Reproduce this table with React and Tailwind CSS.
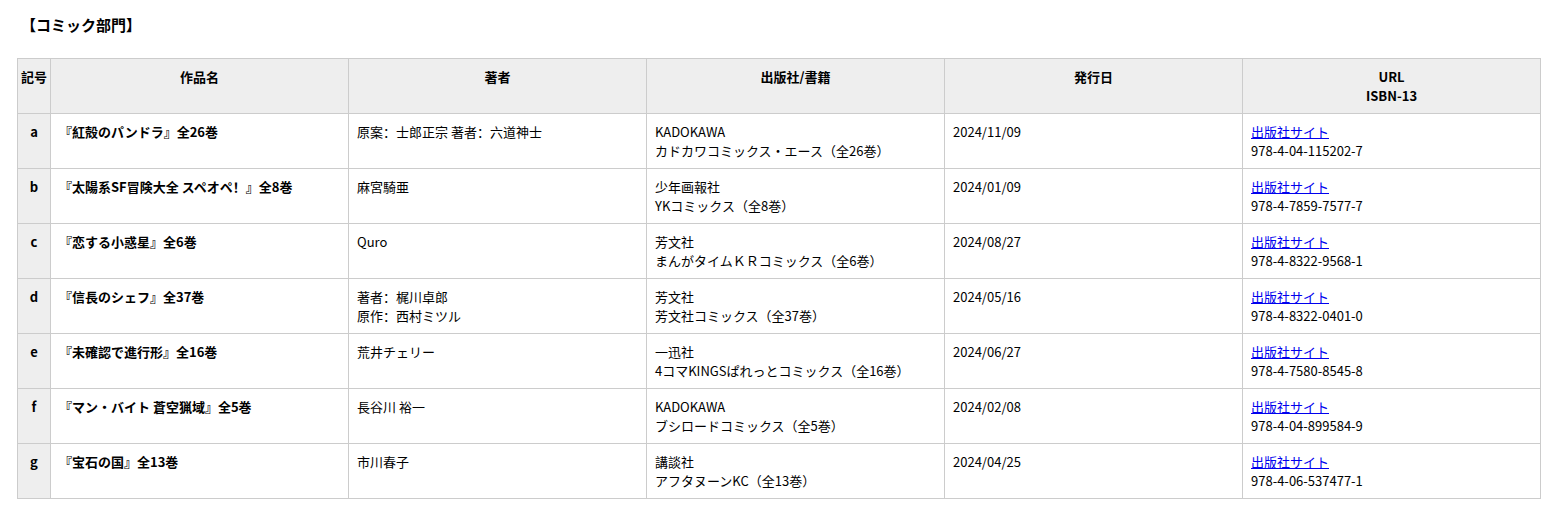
import React from 'react';

const comics = [
  { id: 'a', title: '『紅殻のパンドラ』全26巻', author: ['原案：士郎正宗 著者：六道神士'], publisher: ['KADOKAWA', 'カドカワコミックス・エース（全26巻）'], date: '2024/11/09', isbn: '978-4-04-115202-7' },
  { id: 'b', title: '『太陽系SF冒険大全 スペオペ！』全8巻', author: ['麻宮騎亜'], publisher: ['少年画報社', 'YKコミックス（全8巻）'], date: '2024/01/09', isbn: '978-4-7859-7577-7' },
  { id: 'c', title: '『恋する小惑星』全6巻', author: ['Quro'], publisher: ['芳文社', 'まんがタイムＫＲコミックス（全6巻）'], date: '2024/08/27', isbn: '978-4-8322-9568-1' },
  { id: 'd', title: '『信長のシェフ』全37巻', author: ['著者：梶川卓郎', '原作：西村ミツル'], publisher: ['芳文社', '芳文社コミックス（全37巻）'], date: '2024/05/16', isbn: '978-4-8322-0401-0' },
  { id: 'e', title: '『未確認で進行形』全16巻', author: ['荒井チェリー'], publisher: ['一迅社', '4コマKINGSぱれっとコミックス（全16巻）'], date: '2024/06/27', isbn: '978-4-7580-8545-8' },
  { id: 'f', title: '『マン・バイト 蒼空猟域』全5巻', author: ['長谷川 裕一'], publisher: ['KADOKAWA', 'ブシロードコミックス（全5巻）'], date: '2024/02/08', isbn: '978-4-04-899584-9' },
  { id: 'g', title: '『宝石の国』全13巻', author: ['市川春子'], publisher: ['講談社', 'アフタヌーンKC（全13巻）'], date: '2024/04/25', isbn: '978-4-06-537477-1' },
];

export default function App() {
  return (
    <div className="bg-white text-black px-[17px] pt-[14px] pb-[14px] font-['Noto_Sans_CJK_SC','Noto_Sans_CJK_JP',sans-serif]">
      <h2 className="text-[15px] font-bold leading-[22px] pl-[4px] mb-[22px]">【コミック部門】</h2>

      <table className="w-[1524px] border-collapse text-[13px] leading-[19px] table-fixed">
        <colgroup>
          <col className="w-[33px]" />
          <col />
          <col />
          <col />
          <col />
          <col />
        </colgroup>
        <thead>
          <tr className="h-[55px] bg-[#eeeeee]">
            <th className="border border-[#cccccc] align-top pt-[8px] font-bold">記号</th>
            <th className="border border-[#cccccc] align-top pt-[8px] font-bold">作品名</th>
            <th className="border border-[#cccccc] align-top pt-[8px] font-bold">著者</th>
            <th className="border border-[#cccccc] align-top pt-[8px] font-bold">出版社/書籍</th>
            <th className="border border-[#cccccc] align-top pt-[8px] font-bold">発行日</th>
            <th className="border border-[#cccccc] align-top pt-[8px] font-bold">URL<br />ISBN-13</th>
          </tr>
        </thead>
        <tbody>
          {comics.map((c) => (
            <tr key={c.id} className="h-[55px]">
              <td className="border border-[#cccccc] bg-[#eeeeee] align-top text-center font-bold pt-[8px]">{c.id}</td>
              <td className="border border-[#cccccc] align-top font-bold px-[8px] pt-[8px]">{c.title}</td>
              <td className="border border-[#cccccc] align-top px-[8px] pt-[8px]">
                {c.author.map((a) => <div key={a}>{a}</div>)}
              </td>
              <td className="border border-[#cccccc] align-top px-[8px] pt-[8px]">
                {c.publisher.map((p) => <div key={p}>{p}</div>)}
              </td>
              <td className="border border-[#cccccc] align-top px-[8px] pt-[8px]">{c.date}</td>
              <td className="border border-[#cccccc] align-top px-[8px] pt-[8px]">
                <a href="#" className="text-[#0000ee] underline">出版社サイト</a>
                <div>{c.isbn}</div>
              </td>
            </tr>
          ))}
        </tbody>
      </table>
    </div>
  );
}
